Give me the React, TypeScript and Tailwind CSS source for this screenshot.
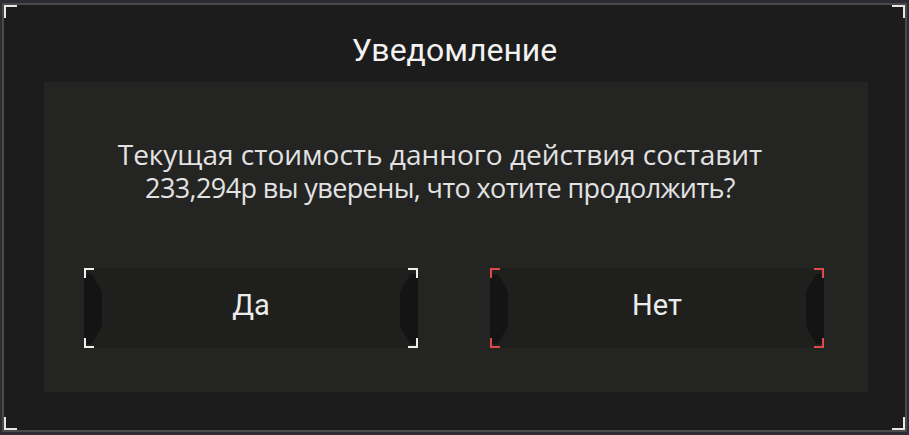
import React from 'react';

function Corners({ color, size = 10 }: { color: string; size?: number }) {
  const s = { width: size, height: size, borderColor: color };
  return (
    <>
      <span className="pointer-events-none absolute left-0 top-0 border-l-2 border-t-2" style={s} />
      <span className="pointer-events-none absolute right-0 top-0 border-r-2 border-t-2" style={s} />
      <span className="pointer-events-none absolute bottom-0 left-0 border-b-2 border-l-2" style={s} />
      <span className="pointer-events-none absolute bottom-0 right-0 border-b-2 border-r-2" style={s} />
    </>
  );
}

function Tab({ side }: { side: 'left' | 'right' }) {
  const points = side === 'left' ? '0,0 8,0 18,18 18,52 8,70 0,70' : '18,0 10,0 0,18 0,52 10,70 18,70';
  return (
    <svg
      width="18"
      height="70"
      viewBox="0 0 18 70"
      className={`absolute top-[6px] ${side === 'left' ? 'left-0' : 'right-0'}`}
    >
      <polygon points={points} fill="#141414" />
    </svg>
  );
}

function ChoiceButton({ label, accent }: { label: string; accent: string }) {
  return (
    <button className="relative flex h-[80px] w-[334px] items-center justify-center bg-[#1f1f1e] pb-[4px] text-[29px] text-[#ececec] [font-family:Roboto,'Liberation_Sans',sans-serif]">
      <Tab side="left" />
      <Tab side="right" />
      <Corners color={accent} />
      <span className="relative">{label}</span>
    </button>
  );
}

export default function App() {
  return (
    <div className="h-[435px] w-[909px] bg-[#2e2b35] pb-[3px] pl-[2px] pr-[2px] pt-[3px]">
      <div className="relative flex h-full flex-col border-2 border-[#4a4a4a] bg-[#1c1c1c]">
        <Corners color="#e6e6e6" size={13} />
        <div className="flex h-[77px] items-center justify-center pt-[12px] text-[32px] text-[#f2f2f2] [font-family:Roboto,'Liberation_Sans',sans-serif]">
          Уведомление
        </div>
        <div className="ml-[40px] mr-[37px] flex h-[310px] flex-col items-center bg-[#242422] pt-[55px]">
          <p className="mr-[32px] flex flex-col items-center text-center text-[#e2e2e2] [font-family:'Open_Sans',sans-serif]">
            <span className="text-[28px] leading-[34px]">Текущая стоимость данного действия составит</span>
            <span className="text-[27px] leading-[34px] tracking-[-0.6px]">
              233,294р вы уверены, что хотите продолжить?
            </span>
          </p>
          <div className="mt-[63px] flex w-full justify-between pl-[40px] pr-[44px]">
            <ChoiceButton label="Да" accent="#eeeeee" />
            <ChoiceButton label="Нет" accent="#e04a4a" />
          </div>
        </div>
      </div>
    </div>
  );
}
